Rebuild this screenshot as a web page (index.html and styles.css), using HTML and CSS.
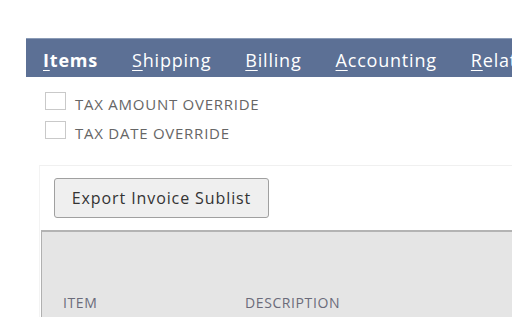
FILE: index.html
```html
<!DOCTYPE html>
<html>
<head>
<meta charset="utf-8">
<link rel="stylesheet" href="styles.css">
</head>
<body>
<div class="page">
  <nav class="tabs">
    <span class="tab active"><u>I</u>tems</span>
    <span class="tab"><u>S</u>hipping</span>
    <span class="tab"><u>B</u>illing</span>
    <span class="tab"><u>A</u>ccounting</span>
    <span class="tab"><u>R</u>elationships</span>
  </nav>
  <div class="checks">
    <label class="check"><span class="box"></span><span class="lbl">TAX AMOUNT OVERRIDE</span></label>
    <label class="check"><span class="box"></span><span class="lbl">TAX DATE OVERRIDE</span></label>
  </div>
  <section class="panel">
    <div class="btnrow"><button class="btn">Export Invoice Sublist</button></div>
    <div class="thead">
      <span class="th th-item">ITEM</span>
      <span class="th th-desc">DESCRIPTION</span>
    </div>
  </section>
</div>
</body>
</html>
```

FILE: styles.css
```css
html, body {
  margin: 0;
  padding: 0;
  background: #fff;
  overflow: hidden;
}
body {
  width: 512px;
  height: 320px;
  font-family: "Open Sans", "Liberation Sans", sans-serif;
}
.page {
  padding-top: 38px;
}
.tabs {
  margin-left: 26px;
  height: 39px;
  background: #5c7095;
  border-top: 1px solid #8a9bb6;
  box-sizing: border-box;
  display: flex;
  align-items: center;
  white-space: nowrap;
  overflow: hidden;
  padding-left: 17px;
  position: relative;
}
.tab {
  color: #fff;
  font-size: 18px;
  margin-right: 34px;
  letter-spacing: 0.8px;
  line-height: 1;
  padding-top: 3px;
  flex: none;
}
.tab u {
  text-decoration-thickness: 1px;
  text-underline-offset: 3px;
}
.tab.active {
  font-weight: 700;
  position: relative;
}
.tab.active::after {
  content: "";
  position: absolute;
  left: 50%;
  bottom: -14px;
  margin-left: -8px;
  border-left: 8px solid transparent;
  border-right: 8px solid transparent;
  border-bottom: 6px solid #fff;
}
.checks {
  padding: 15px 0 0 45px;
  display: flex;
  flex-direction: column;
  gap: 11px;
}
.check {
  display: flex;
  align-items: center;
  height: 18px;
}
.box {
  width: 19px;
  height: 16px;
  border: 1px solid #c9c9c9;
  background: #fff;
  margin-right: 9px;
  flex: none;
}
.lbl {
  font-size: 15px;
  color: #666;
  padding-top: 6px;
  letter-spacing: 0.75px;
  white-space: nowrap;
}
.panel {
  margin: 26px 0 0 39px;
  border-top: 1px solid #f0f0f0;
  border-left: 1px solid #f3f3f3;
}
.btnrow {
  padding: 12px 0 12px 14px;
}
.btn {
  font-family: "Open Sans", "Liberation Sans", sans-serif;
  font-size: 16px;
  color: #333;
  background: #efefef;
  border: 1px solid #a0a0a0;
  border-radius: 3px;
  width: 215px;
  height: 40px;
  padding: 0;
  letter-spacing: 0.9px;
  white-space: nowrap;
}
.thead {
  margin-left: 1px;
  height: 87px;
  background: #e5e5e5;
  border-top: 2px solid #b3b3b3;
  border-left: 1px solid #b0b0b0;
  box-sizing: border-box;
  display: flex;
  align-items: flex-end;
  padding-bottom: 5px;
}
.th {
  font-size: 14px;
  color: #6b6b7a;
  letter-spacing: 0.6px;
}
.th-item {
  margin-left: 21px;
  width: 182px;
}
```
